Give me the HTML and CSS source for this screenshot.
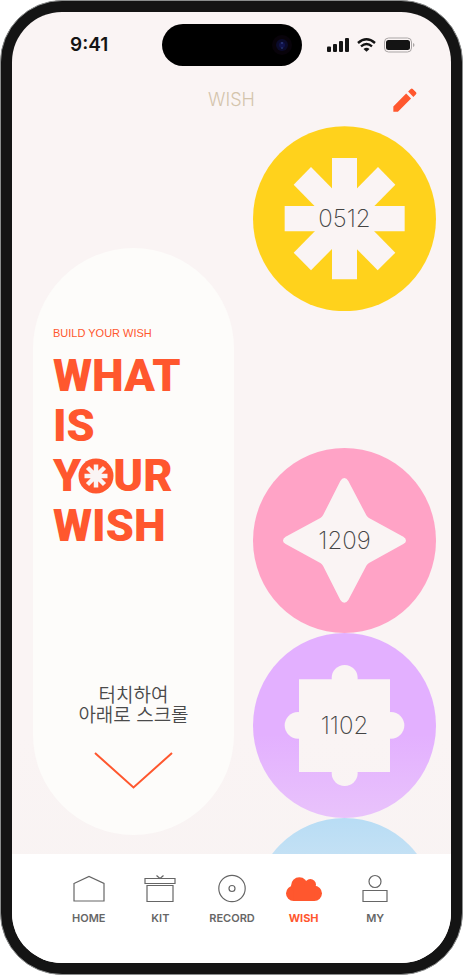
FILE: index.html
```html
<!DOCTYPE html>
<html lang="ko">
<head>
<meta charset="utf-8">
<meta name="viewport" content="width=device-width, initial-scale=1">
<title>WISH</title>
<link rel="stylesheet" href="styles.css">
</head>
<body>
<div class="phone">
  <div class="screen">
    <div class="status">
      <span class="status-time">9:41</span>
      <div class="island">
        <svg class="lens" viewBox="0 0 22 22" aria-hidden="true">
          <circle cx="11" cy="11" r="10" fill="#08030a"/>
          <circle cx="11" cy="11" r="6" fill="#0b0b2a"/>
          <circle cx="11" cy="11" r="3" fill="#10124a"/>
          <circle cx="11" cy="9" r="1" fill="#2b3a78"/>
          <circle cx="11" cy="14" r="1" fill="#23306a"/>
        </svg>
      </div>
      <svg class="status-icons" viewBox="0 0 88 16" aria-hidden="true">
        <g fill="#141414">
          <rect x="0" y="9.5" width="4" height="5.5" rx="1"/>
          <rect x="6" y="7" width="4" height="8" rx="1"/>
          <rect x="12" y="4" width="4" height="11" rx="1"/>
          <rect x="18" y="1" width="4" height="14" rx="1"/>
          <path d="M39.500 14.800L36.500 11.900Q39.500 9.700 42.500 11.900Z"/>
          <rect x="59" y="3" width="24" height="10" rx="2.500"/>
        </g>
        <g fill="none" stroke="#141414" stroke-width="2.400">
          <path d="M31 6Q39.500 -1.500 48 6"/>
          <path d="M34 9.400Q39.500 4.800 45 9.400"/>
        </g>
        <rect x="57.500" y="1" width="27" height="14" rx="4" fill="none" stroke="#a9a5a5"/>
        <path d="M86 6v4q1.500-.500 1.500-2t-1.500-2z" fill="#a9a5a5"/>
      </svg>
    </div>

    <header class="topbar">
      <h1 class="topbar-title">WISH</h1>
      <button class="edit" type="button" aria-label="Edit">
        <svg viewBox="248 186 73 73" aria-hidden="true">
          <path fill="#ff572e" d="M249 258V242L288 203L303 218L263 258ZM294 197L302 189Q305 186 308 189L318 199Q321 202 318 205L310 213Z"/>
        </svg>
      </button>
    </header>

    <main class="content">
      <section class="prompt">
        <p class="eyebrow">BUILD YOUR WISH</p>
        <h2 class="headline">WHAT<br>IS<br>Y<span class="letter-o">O<svg viewBox="0 0 36 36" aria-hidden="true">
          <circle cx="18" cy="18" r="17.500" fill="#ff572e"/>
          <path stroke="#faf4f4" stroke-width="4.500" d="M18 6.500V29.500M6.500 18H29.500M9.500 9.500L26.500 26.500M26.500 9.500L9.500 26.500"/>
        </svg></span>UR<br>WISH</h2>
        <button class="scroll-hint" type="button">
          <span>터치하여<br>아래로 스크롤</span>
          <svg viewBox="0 0 79 37" aria-hidden="true">
            <path d="M1 1L39.500 35.500L78 1" fill="none" stroke="#ff572e" stroke-width="2"/>
          </svg>
        </button>
      </section>

      <ul class="wishes">
        <li class="wish-first">
          <button class="wish" type="button">
            <svg viewBox="39 19 549 555" aria-hidden="true">
              <ellipse cx="313.500" cy="297" rx="274.500" ry="277.500" fill="#ffd21c"/>
              <g fill="#faf4f4">
                <path d="M276 115H351V479H276Z"/>
                <path d="M134 259H494V335H134Z"/>
                <path d="M213 142L161 195L413 452L466 399Z"/>
                <path d="M414 142L466 195L213 452L161 399Z"/>
              </g>
            </svg>
            <span>0512</span>
          </button>
        </li>
        <li>
          <button class="wish" type="button">
            <svg viewBox="39 24 549 555" aria-hidden="true">
              <ellipse cx="313.500" cy="301.500" rx="274.500" ry="277.500" fill="#ffa3c6"/>
              <path fill="#faf4f4" d="M301 123Q306 114 313 114Q320 114 325 123L379 226Q382 231 387 234L490 290Q498 295 498 302Q498 308 490 312L387 369Q382 372 379 377L325 480Q320 488 313 488Q306 488 301 480L249 377Q246 372 241 369L137 312Q129 308 129 302Q129 295 137 290L241 234Q246 231 249 226Z"/>
            </svg>
            <span>1209</span>
          </button>
        </li>
        <li>
          <button class="wish" type="button">
            <svg viewBox="39 9 549 555" aria-hidden="true">
              <ellipse cx="313.500" cy="286.500" rx="274.500" ry="277.500" fill="#e3b0ff"/>
              <g fill="#faf4f4">
                <path d="M177 148H450V426H177Z"/>
                <circle cx="314" cy="144" r="39"/>
                <circle cx="314" cy="429" r="39"/>
                <circle cx="174" cy="286" r="40"/>
                <circle cx="453" cy="286" r="40"/>
              </g>
            </svg>
            <span>1102</span>
          </button>
        </li>
        <li>
          <button class="wish" type="button" aria-label="Wish">
            <svg viewBox="0 0 549 555" aria-hidden="true">
              <ellipse cx="274.500" cy="277.500" rx="274.500" ry="277.500" fill="#a0d4f6"/>
            </svg>
          </button>
        </li>
      </ul>
    </main>

    <nav class="tabs">
      <a class="tab" href="#home">
        <svg viewBox="0 0 36 30" aria-hidden="true"><path d="M3 9.500L18 2.500L33 9.500V27H3Z"/></svg>
        HOME
      </a>
      <a class="tab" href="#kit">
        <svg viewBox="0 0 36 30" aria-hidden="true"><path d="M3 4.500H33V9.500H3ZM5 11.500H31V27.500H5ZM14.500 1.500L18 4.500L21.500 1.500"/></svg>
        KIT
      </a>
      <a class="tab" href="#record">
        <svg viewBox="0 0 36 30" aria-hidden="true"><circle cx="18" cy="14.500" r="13.200"/><circle cx="18" cy="14.500" r="3"/></svg>
        RECORD
      </a>
      <a class="tab tab-active" href="#wish" aria-current="page">
        <svg viewBox="168 30 108 90" aria-hidden="true">
          <circle cx="191" cy="88" r="23"/><circle cx="253" cy="88" r="23"/><circle cx="208" cy="65" r="25"/><circle cx="241" cy="62" r="17"/><path d="M191 65H253V111H191Z"/>
        </svg>
        WISH
      </a>
      <a class="tab" href="#my">
        <svg viewBox="0 0 36 30" aria-hidden="true"><circle cx="18" cy="7.500" r="6"/><path d="M6 16.500H30V27.500H6Z"/></svg>
        MY
      </a>
    </nav>
  </div>
</div>
</body>
</html>
```
FILE: styles.css
```css
* {
  box-sizing: border-box;
}

body {
  margin: 0;
  background: #fff;
  font-family: Inter, "Noto Sans CJK KR", sans-serif;
}

h1, h2, p, ul {
  margin: 0;
  padding: 0;
}

ul {
  list-style: none;
}

button {
  padding: 0;
  border: 0;
  background: none;
  font: inherit;
  color: inherit;
  cursor: pointer;
}

svg {
  display: block;
}

.phone {
  height: 100vh;
  padding: 11px;
  border: 1px solid #8b8d8d;
  border-radius: 62px;
  background: #141414;
}

.screen {
  display: flex;
  flex-direction: column;
  height: 100%;
  border-radius: 50px;
  overflow: hidden;
  background: #faf4f4;
}

.status {
  display: grid;
  grid-template-columns: 1fr 140px 1fr;
  align-items: center;
  padding: 12px 36px 0;
}

.status-time {
  padding-left: 22px;
  font-size: 19px;
  font-weight: 600;
  line-height: 24px;
  color: #141414;
}

.island {
  display: flex;
  align-items: center;
  justify-content: flex-end;
  height: 42px;
  padding-right: 9px;
  border-radius: 21px;
  background: #000;
}

.lens {
  width: 22px;
  height: 22px;
}

.status-icons {
  justify-self: end;
  width: 88px;
  height: 16px;
}

.topbar {
  display: grid;
  grid-template-columns: 1fr auto 1fr;
  align-items: center;
  height: 60px;
  padding: 7px 34px 0;
}

.topbar-title {
  grid-column: 2;
  font-size: 18px;
  font-weight: 300;
  line-height: 24px;
  color: #d4c4ac;
}

.edit {
  justify-self: end;
}

.edit svg {
  width: 24px;
  height: 24px;
}

.content {
  flex: 1;
  min-height: 0;
  display: grid;
  grid-template-columns: 201fr 183fr;
  grid-template-rows: minmax(0, 1fr);
  column-gap: 19px;
  padding: 0 15px 0 21px;
}

.prompt {
  position: relative;
  z-index: 2;
  display: flex;
  flex-direction: column;
  margin: 122px 0 19px;
  padding: 76px 20px 46px;
  border-radius: 101px;
  background: #fdfcfa;
  color: #ff572e;
}

.eyebrow {
  font-family: "Liberation Sans", sans-serif;
  font-size: 11px;
  line-height: 18px;
}

.headline {
  margin-top: 9px;
  font-family: Roboto, sans-serif;
  font-size: 45px;
  font-weight: 900;
  line-height: 50px;
}

.letter-o {
  position: relative;
  display: inline-block;
  width: 32px;
  text-align: center;
}

.letter-o svg {
  position: absolute;
  top: 7px;
  left: -3px;
  width: 36px;
  height: 36px;
}

.scroll-hint {
  display: flex;
  flex-direction: column;
  align-items: center;
  gap: 28px;
  margin-top: auto;
  font-family: "Noto Sans CJK KR", sans-serif;
  font-size: 19px;
  font-weight: 350;
  line-height: 20px;
  color: #4a4a4a;
}

.scroll-hint svg {
  width: 79px;
  height: 37px;
}

.wishes {
  overflow-y: auto;
  scrollbar-width: none;
}

.wish-first {
  margin-bottom: 137px;
}

.wish {
  display: grid;
  place-items: center;
  width: 100%;
  font-size: 24px;
  font-weight: 250;
  line-height: 30px;
  color: #444;
}

.wish > * {
  grid-area: 1 / 1;
}

.wish svg {
  width: 100%;
}

.tabs {
  position: relative;
  display: grid;
  grid-template-columns: repeat(5, 1fr);
  padding: 20px 40px 37px 41px;
  background: #fff;
}

.tabs::before {
  content: "";
  position: absolute;
  right: 0;
  bottom: 100%;
  left: 0;
  height: 120px;
  background: linear-gradient(rgba(247, 243, 242, 0), rgba(247, 243, 242, 0.4));
  pointer-events: none;
}

.tab {
  display: flex;
  flex-direction: column;
  align-items: center;
  gap: 6px;
  font-size: 11px;
  font-weight: 600;
  line-height: 16px;
  color: #666;
  text-decoration: none;
}

.tab svg {
  width: 36px;
  height: 30px;
  fill: none;
  stroke: #666;
  stroke-width: 1.2px;
}

.tab-active {
  font-weight: 700;
  color: #ff572e;
}

.tab-active svg {
  fill: #ff572e;
  stroke: none;
}
```
